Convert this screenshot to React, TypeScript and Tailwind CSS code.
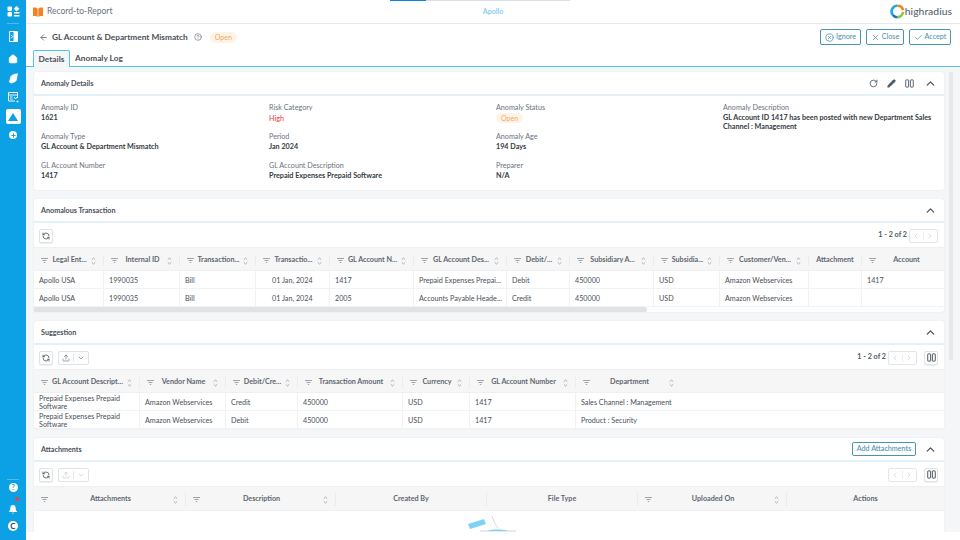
import { ReactNode } from 'react';
import { ArrowLeft, Check, ChevronDown, ChevronLeft, ChevronRight, ChevronUp, CircleHelp, CircleX, Home, Pencil, RefreshCcw, RotateCw, Upload, X } from 'lucide-react';

function Funnel() {
  return (
    <svg width="7" height="5" viewBox="0 0 7 5" className="shrink-0">
      <path d="M0 0h7v1H0z M1.5 2h4v1h-4z M2.8 4h1.4v1H2.8z" fill="#9ca3af" />
    </svg>
  );
}

function Sorter() {
  return (
    <svg width="5" height="8" viewBox="0 0 5 8" className="shrink-0">
      <path d="M.8 2.6 2.5 1l1.7 1.6M.8 5.4 2.5 7l1.7-1.6" fill="none" stroke="#9ca3af" strokeWidth="0.9" />
    </svg>
  );
}

// two separate bars, the "columns" picker in the reference
function ColumnsIcon({ size = 9 }: { size?: number }) {
  return (
    <svg width={size} height={size} viewBox="0 0 10 10" fill="none" stroke="currentColor" strokeWidth="1.100">
      <rect x="0.800" y="1" width="3.200" height="8" rx="0.500" />
      <rect x="6" y="1" width="3.200" height="8" rx="0.500" />
    </svg>
  );
}

function HeadCell({ label, filter = true, sort = true, tail = 'pr-[7px]' }: { label: string; filter?: boolean; sort?: boolean; tail?: string }) {
  return (
    <div className={`flex min-w-0 items-center pl-[7px] ${tail} my-[4px] border-r border-[#ececec] last:border-r-0`}>
      {filter && <Funnel />}
      <span className="flex-1 truncate text-center text-[7.2px] font-bold text-[#5f6670]">{label}</span>
      {sort && <Sorter />}
    </div>
  );
}

function Section({ title, action, children }: { title: string; action?: ReactNode; children: ReactNode }) {
  return (
    <section className="w-[910px] shrink-0 rounded-[2px] bg-white shadow-[0_0_1px_#bcdcec]">
      <div className="flex h-[24px] items-center justify-between border-b-2 border-[#e4f1f8] pl-[7px] pr-[7px]">
        <h2 className="pt-[2px] text-[7.2px] font-bold text-[#4a5058]">{title}</h2>
        <div className="flex items-center gap-[7px] text-[#4b5563]">
          {action}
          <ChevronUp size={13} strokeWidth={2.4} />
        </div>
      </div>
      {children}
    </section>
  );
}

function Field({ label, children }: { label: string; children: ReactNode }) {
  return (
    <div className="h-[29px]">
      <div className="text-[7.2px] leading-[10px] text-[#6b7280]">{label}</div>
      <div className="text-[7.2px] font-bold leading-[9px] text-[#343a42]">{children}</div>
    </div>
  );
}

function ToolButton({ children }: { children: ReactNode }) {
  return <div className="flex h-[14px] w-[14px] items-center justify-center rounded-[2px] border border-[#dfe3e6] bg-white text-[#4b5563] shadow-[0_1px_1px_#eceff1]">{children}</div>;
}

function UploadGroup({ muted }: { muted?: boolean }) {
  return (
    <div className={`flex h-[14px] w-[31px] items-center rounded-[2px] border border-[#dfe3e6] ${muted ? 'text-[#c5cad0]' : 'text-[#6b7280]'}`}>
      <span className="flex w-[15px] justify-center border-r border-[#e5e7eb]"><Upload size={8} /></span>
      <span className="flex flex-1 justify-center"><ChevronDown size={8} /></span>
    </div>
  );
}

function Pager() {
  return (
    <div className="flex h-[14px] w-[29px] items-center rounded-[2px] border border-[#e3e6e9] text-[#c5cad0]">
      <span className="flex w-1/2 justify-center border-r border-[#eceef0]"><ChevronLeft size={8} /></span>
      <span className="flex w-1/2 justify-center"><ChevronRight size={8} /></span>
    </div>
  );
}

function Toolbar({ left, right }: { left: ReactNode; right: ReactNode }) {
  return (
    <div className="flex h-[24px] items-center justify-between pl-[5px] pr-[6px] pt-[1px]">
      <div className="flex items-center gap-[5px]">{left}</div>
      <div className="flex items-center gap-[2px] text-[7.2px] font-bold text-[#4b5563]">{right}</div>
    </div>
  );
}

function Row({ cols, cells }: { cols: string; cells: ReactNode[] }) {
  return (
    <div className={`grid ${cols} h-[18px] border-b border-[#f0f2f4] text-[7.2px] text-[#4a5058]`}>
      {cells.map((c, i) => (
        <div key={i} className="flex items-center overflow-hidden border-r border-[#f0f2f4] px-[5px] pt-[3px] leading-[8.500px] last:border-r-0">{c}</div>
      ))}
    </div>
  );
}

const txCols = 'grid-cols-[70px_76px_76px_74px_84px_93px_63px_84px_66px_89px_53px_82px]';
const sgCols = 'grid-cols-[106px_86px_72px_105px_67px_106px_368px]';
const atCols = 'grid-cols-[152px_150px_151px_151px_149px_157px]';

function Logo() {
  return (
    <svg width="15" height="15" viewBox="0 0 17 17" className="shrink-0">
      <g fill="none" strokeWidth="3">
        <path d="M3.200 12.500A6.500 6.500 0 0 1 8.500 2" stroke="#22a7df" />
        <path d="M8.500 2a6.500 6.500 0 0 1 6.300 5" stroke="#f58220" />
        <path d="M14.800 9a6.500 6.500 0 0 1-6.300 6" stroke="#8dc63f" />
        <path d="M8.500 15a6.500 6.500 0 0 1-5.300-2.500" stroke="#1c75bc" />
      </g>
    </svg>
  );
}

function Sidebar() {
  return (
    <aside className="flex w-[26px] shrink-0 flex-col items-center bg-[#0ba1e4] text-white">
      <div className="flex h-[23px] w-full items-center justify-center">
        <svg width="13" height="11" viewBox="0 0 13 11" fill="white">
          <rect x="0.500" y="0.500" width="4.500" height="4.500" rx="1" />
          <path d="M9.500 0 12.500 2.700 9.500 5.400 6.800 2.700z" />
          <rect x="0.500" y="6" width="4.500" height="4.500" rx="1" />
          <rect x="7" y="6" width="5.500" height="1.500" />
          <rect x="7" y="9" width="5.500" height="1.500" />
        </svg>
      </div>
      <div className="h-px w-[12px] bg-[#4dbcec]" />
      <div className="mt-[6px] flex h-[12px] items-center justify-center">
        <svg width="9" height="11" viewBox="0 0 9 11">
          <rect width="9" height="11" rx="1" fill="white" />
          <path d="M1 1h3.500v9H1z" fill="#0ba1e4" />
          <path d="m2 3.700 1.500 1.800L2 7.300" stroke="white" fill="none" strokeWidth="0.900" />
        </svg>
      </div>
      <div className="mt-[10px] flex h-[13px] items-center"><Home size={10} fill="white" strokeWidth={2} /></div>
      <div className="mt-[7px] flex h-[12px] items-center">
        <svg width="9" height="11" viewBox="0 0 9 11" fill="white"><path d="M2 10.500 0 9 1.500 3.500C2.500 1.500 6 0 9 .5L7.500 7.500C6.500 9 4 10 2 10.500z" /></svg>
      </div>
      <div className="mt-[7px] flex h-[13px] items-center">
        <svg width="11" height="11" viewBox="0 0 11 11" fill="none" stroke="white">
          <path d="M9.500 6V.5H.5v8.500h6.500" />
          <path d="M.5 3h9M2 5h2.500M2 7h2.500M6 5l1.500 2 1.500-2" strokeWidth="0.900" />
          <circle cx="9.500" cy="9.500" r="1" fill="white" stroke="none" />
        </svg>
      </div>
      <div className="mt-[5px] flex h-[15px] w-[15px] items-center justify-center rounded-[2px] bg-white">
        <svg width="10" height="8" viewBox="0 0 10 8"><path d="M5 0 10 8H0z" fill="#0ba1e4" /></svg>
      </div>
      <div className="mt-[7px] flex h-[8px] w-[8px] items-center justify-center rounded-full bg-white">
        <svg width="5" height="5" viewBox="0 0 5 5"><path d="M2.500 .5v4M.5 2.500h4" stroke="#0ba1e4" /></svg>
      </div>
      <div className="mt-auto flex flex-col items-center">
        <div className="h-px w-[12px] bg-[#4dbcec]" />
        <div className="mt-[3px] flex h-[9px] w-[9px] items-center justify-center rounded-full bg-white text-[7px] font-bold leading-none text-[#0ba1e4]">?</div>
        <div className="relative mt-[12px] flex h-[10px] items-center">
          <svg width="8" height="9" viewBox="0 0 8 9" fill="white"><path d="M4 0C2 0 1.300 1.500 1.300 3.200 1.300 5 .8 5.800 0 6.500V7h8v-.5C7.200 5.800 6.700 5 6.700 3.200 6.700 1.500 6 0 4 0zM3 7.800h2L4 9z" /></svg>
          <span className="absolute left-[6px] top-[-7px] h-[4px] w-[4px] rounded-full bg-[#ef4444]" />
        </div>
        <div className="mb-[9px] mt-[7px] flex h-[10px] w-[10px] items-center justify-center rounded-full bg-white text-[8px] font-bold leading-none text-[#374151]">C</div>
      </div>
    </aside>
  );
}

export default function App() {
  const transactions = [
    ['Apollo USA', '1990035', 'Bill', '01 Jan, 2024', '1417', 'Prepaid Expenses Prepai...', 'Debit', '450000', 'USD', 'Amazon Webservices', '', '1417'],
    ['Apollo USA', '1990035', 'Bill', '01 Jan, 2024', '2005', 'Accounts Payable Heade...', 'Credit', '450000', 'USD', 'Amazon Webservices', '', ''],
  ];
  const suggestions = [
    ['Prepaid Expenses Prepaid Software', 'Amazon Webservices', 'Credit', '450000', 'USD', '1417', 'Sales Channel : Management'],
    ['Prepaid Expenses Prepaid Software', 'Amazon Webservices', 'Debit', '450000', 'USD', '1417', 'Product : Security'],
  ];

  return (
    <div className="flex h-screen w-screen overflow-hidden bg-white font-['Lato','Open_Sans',sans-serif]">
      <Sidebar />
      <div className="relative flex min-w-0 flex-1 flex-col">
        {/* top loading bar */}
        <div className="absolute left-[364px] top-0 h-px w-[180px] bg-[#dcdfe2]">
          <div className="h-px w-[36px] bg-[#0a84e0]" />
        </div>

        <header className="relative flex h-[24px] shrink-0 items-center justify-between border-b border-[#e8eaec] pl-[7px] pr-[8px]">
          <div className="flex items-center gap-[4px]">
            <svg width="10" height="10" viewBox="0 0 10 10" fill="#f58220"><path d="M0 .5C2 .2 3.800.6 4.700 1.500V10C3.800 9.200 2 8.800 0 9zM10 .5C8 .2 6.200.6 5.300 1.500V10C6.200 9.200 8 8.800 10 9z" /></svg>
            <span className="text-[8.500px] text-[#6b7280]">Record-to-Report</span>
          </div>
          <span className="absolute left-[467px] -translate-x-1/2 text-[7px] font-bold text-[#7fd0f5]">Apollo</span>
          <div className="flex items-center">
            <Logo />
            <span className="text-[10.400px] font-medium text-[#5b6670]">highradius</span>
          </div>
        </header>

        <div className="flex h-[26px] shrink-0 items-center justify-between pl-[13px] pr-[9px]">
          <div className="flex items-center">
            <ArrowLeft size={9} strokeWidth={2.4} className="text-[#6b7280]" />
            <h1 className="ml-[4px] text-[8.300px] font-bold text-[#4a5058]">GL Account &amp; Department Mismatch</h1>
            <CircleHelp size={8} className="ml-[6px] text-[#6b7280]" />
            <span className="ml-[8px] rounded-full bg-[#fdf4e7] px-[5px] py-[1px] text-[7px] leading-[9px] text-[#eeaa5c]">Open</span>
          </div>
          <div className="flex items-center gap-[5px] text-[7.200px] text-[#4a8fb0]">
            <button className="flex h-[16px] w-[41px] items-center justify-center gap-[2px] rounded-[2px] border border-[#4a93b5]"><CircleX size={9} />Ignore</button>
            <button className="flex h-[16px] w-[38px] items-center justify-center gap-[2px] rounded-[2px] border border-[#4a93b5]"><X size={9} />Close</button>
            <button className="flex h-[16px] w-[42px] items-center justify-center gap-[2px] rounded-[2px] border border-[#4a93b5]"><Check size={9} />Accept</button>
          </div>
        </div>

        <nav className="flex h-[17px] shrink-0 items-end border-b border-[#4fc3f7] pl-[7px] text-[8.300px] font-bold text-[#4a5058]">
          <div className="-mb-px flex h-[17px] w-[37px] items-center justify-center rounded-t-[2px] border border-b-0 border-[#4fc3f7] bg-[#f5f6f7]">Details</div>
          <div className="flex h-[16px] items-center pl-[5px]">Anomaly Log</div>
        </nav>

        <main className="relative mb-[8px] flex min-h-0 flex-1 flex-col gap-[9px] overflow-hidden bg-[#f5f6f7] pl-[8px] pt-[5px]">
          <Section
            title="Anomaly Details"
            action={
              <div className="mr-[3px] flex items-center gap-[9px]">
                <RotateCw size={9} strokeWidth={2.2} />
                <Pencil size={9} fill="#4b5563" />
                <span className="text-[#5b6470]"><ColumnsIcon /></span>
              </div>
            }
          >
            <div className="grid h-[94px] grid-cols-[228px_227px_227px_215px] pl-[7px] pt-[7px]">
              <div>
                <Field label="Anomaly ID">1621</Field>
                <Field label="Anomaly Type">GL Account &amp; Department Mismatch</Field>
                <Field label="GL Account Number">1417</Field>
              </div>
              <div>
                <Field label="Risk Category"><span className="font-medium leading-[11px] text-[#ef4444]">High</span></Field>
                <Field label="Period">Jan 2024</Field>
                <Field label="GL Account Description">Prepaid Expenses Prepaid Software</Field>
              </div>
              <div>
                <Field label="Anomaly Status">
                  <span className="inline-block rounded-full bg-[#fdf4e7] px-[5px] text-[7px] font-normal leading-[10px] text-[#eeaa5c]">Open</span>
                </Field>
                <Field label="Anomaly Age">194 Days</Field>
                <Field label="Preparer">N/A</Field>
              </div>
              <div>
                <Field label="Anomaly Description">GL Account ID 1417 has been posted with new Department Sales Channel : Management</Field>
              </div>
            </div>
          </Section>

          <Section title="Anomalous Transaction">
            <Toolbar
              left={<ToolButton><RefreshCcw size={8} strokeWidth={2.4} /></ToolButton>}
              right={<><span>1 - 2 of 2</span><Pager /></>}
            />
            <div className={`grid ${txCols} h-[24px] border-y border-[#eef0f2] bg-[#f6f6f6] pt-[3px]`}>
              <HeadCell label="Legal Ent..." />
              <HeadCell label="Internal ID" />
              <HeadCell label="Transaction..." />
              <HeadCell label="Transactio..." />
              <HeadCell label="GL Account N..." />
              <HeadCell label="GL Account Des..." />
              <HeadCell label="Debit/..." />
              <HeadCell label="Subsidiary A..." />
              <HeadCell label="Subsidia..." />
              <HeadCell label="Customer/Ven..." />
              <HeadCell label="Attachment" filter={false} sort={false} />
              <HeadCell label="Account" sort={false} />
            </div>
            {transactions.map((t, i) => (
              <Row
                key={i}
                cols={txCols}
                cells={t.map((c, j) => (j === 3 ? <span className="whitespace-nowrap pl-[11px]">{c}</span> : <span className="whitespace-nowrap">{c}</span>))}
              />
            ))}
            {/* horizontal scrollbar */}
            <div className="h-[5px] w-[613px] rounded-r-full bg-[#e1e2e3]" />
          </Section>

          <Section title="Suggestion">
            <Toolbar
              left={<><ToolButton><RefreshCcw size={8} strokeWidth={2.4} /></ToolButton><UploadGroup /></>}
              right={<><span>1 - 2 of 2</span><Pager /><span className="ml-[5px]"><ToolButton><ColumnsIcon /></ToolButton></span></>}
            />
            <div className={`grid ${sgCols} h-[24px] border-y border-[#eef0f2] bg-[#f6f6f6] pt-[3px]`}>
              <HeadCell label="GL Account Descript..." />
              <HeadCell label="Vendor Name" />
              <HeadCell label="Debit/Cre..." />
              <HeadCell label="Transaction Amount" />
              <HeadCell label="Currency" />
              <HeadCell label="GL Account Number" />
              <HeadCell label="Department" tail="pr-[270px]" />
            </div>
            {suggestions.map((s, i) => (
              <Row key={i} cols={sgCols} cells={s} />
            ))}
          </Section>

          <Section
            title="Attachments"
            action={<button className="mr-px flex h-[14px] w-[64px] items-center justify-center rounded-[2px] border border-[#4a93b5] text-[7.200px] font-medium text-[#4a8fb0]">Add Attachments</button>}
          >
            <Toolbar
              left={<><ToolButton><RefreshCcw size={8} strokeWidth={2.4} /></ToolButton><UploadGroup muted /></>}
              right={<><Pager /><span className="ml-[5px]"><ToolButton><ColumnsIcon /></ToolButton></span></>}
            />
            <div className={`grid ${atCols} h-[25px] border-y border-[#eef0f2] bg-[#f6f6f6] pt-[2px]`}>
              <HeadCell label="Attachments" />
              <HeadCell label="Description" />
              <HeadCell label="Created By" filter={false} sort={false} />
              <HeadCell label="File Type" filter={false} sort={false} />
              <HeadCell label="Uploaded On" />
              <HeadCell label="Actions" filter={false} sort={false} />
            </div>
            <div className="flex h-[40px] justify-center pt-[5px]">
              <svg width="60" height="16" viewBox="0 0 60 16" className="ml-[6px]">
                <path d="M6 8 22 3l2 5-16 5z" fill="#7fd0f5" />
                <path d="M30 0l3 8 3 4" fill="none" stroke="#b9c0c6" strokeWidth="0.600" />
                <path d="M18 15h36" stroke="#d1d5db" strokeWidth="1" />
                <path d="M26 15c2-2 16-2 20 0z" fill="#7fd0f5" />
              </svg>
            </div>
          </Section>

          {/* page scrollbar */}
          <div className="absolute left-[923px] top-[5px] h-[288px] w-[4px] bg-[#e6e8ea]" />
        </main>
      </div>
    </div>
  );
}
